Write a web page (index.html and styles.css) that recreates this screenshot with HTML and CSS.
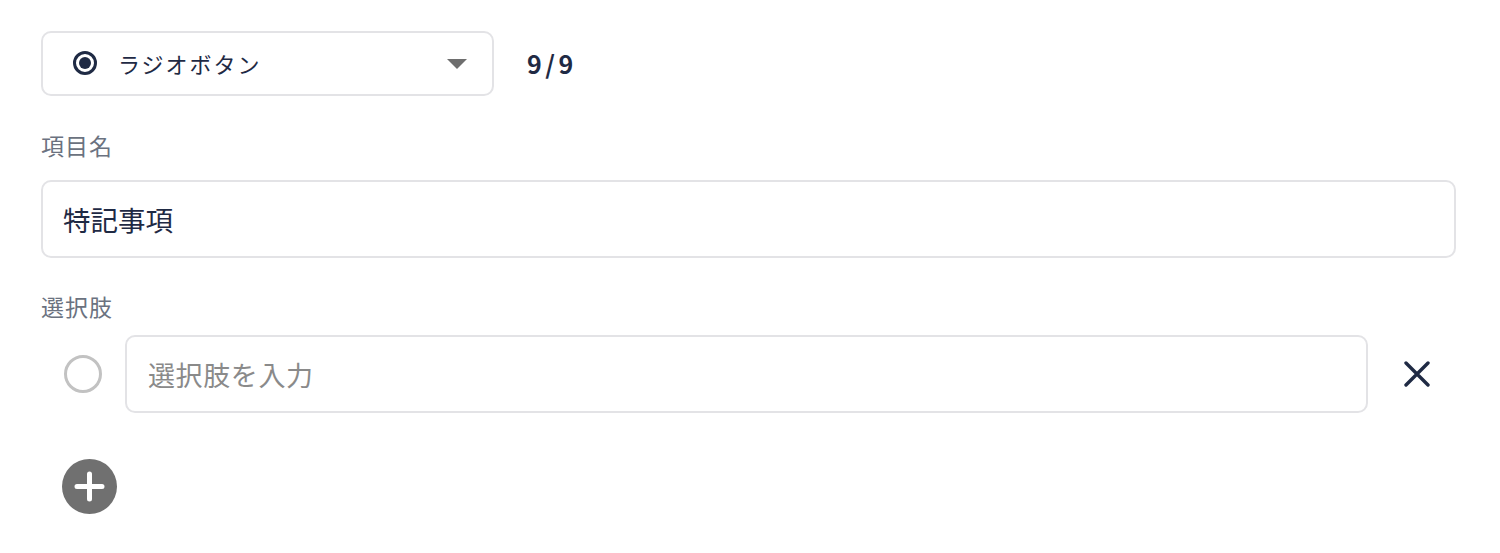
FILE: index.html
```html
<!DOCTYPE html>
<html lang="ja">
<head>
<meta charset="utf-8">
<link rel="stylesheet" href="styles.css">
</head>
<body>
<div class="form">
  <div class="type-row">
    <div class="select">
      <span class="radio-on"><span class="dot"></span></span>
      <span class="select-text">ラジオボタン</span>
      <span class="caret"></span>
    </div>
    <span class="count">9/9</span>
  </div>

  <div class="label label-first">項目名</div>
  <div class="input"><span class="value">特記事項</span></div>

  <div class="label label-second">選択肢</div>
  <div class="option-row">
    <span class="radio-off"></span>
    <div class="input option-input"><span class="placeholder">選択肢を入力</span></div>
    <span class="remove">
      <svg width="26" height="26" viewBox="0 0 26 26"><path d="M2 2 L24 24 M24 2 L2 24" stroke="#1f2a44" stroke-width="3.4" stroke-linecap="round" fill="none"/></svg>
    </span>
  </div>

  <div class="add">
    <svg width="55" height="55" viewBox="0 0 55 55"><circle cx="27.5" cy="27.5" r="27.5" fill="#707070"/><path d="M27.5 15 V40 M15 27.5 H40" stroke="#fff" stroke-width="5" stroke-linecap="round"/></svg>
  </div>
</div>
</body>
</html>
```

FILE: styles.css
```css
html, body {
  margin: 0;
  padding: 0;
  background: #ffffff;
}
body {
  font-family: "Noto Sans CJK JP", "Noto Sans", sans-serif;
  color: #1f2a44;
}
.form {
  padding: 31px 44px 0 41px;
  display: flex;
  flex-direction: column;
  align-items: stretch;
}
.type-row {
  display: flex;
  align-items: center;
  gap: 33px;
}
.select {
  box-sizing: border-box;
  width: 453px;
  height: 65px;
  border: 2px solid #e3e3e6;
  border-radius: 10px;
  display: flex;
  align-items: center;
  padding: 0 25px 2px 30px;
}
.radio-on {
  box-sizing: border-box;
  width: 24px;
  height: 24px;
  border: 3px solid #1f2a44;
  border-radius: 50%;
  display: flex;
  align-items: center;
  justify-content: center;
  flex: none;
}
.dot {
  width: 12px;
  height: 12px;
  border-radius: 50%;
  background: #1f2a44;
}
.select-text {
  margin-left: 21px;
  font-size: 22px;
  letter-spacing: 2px;
  flex: 1;
}
.caret {
  width: 0;
  height: 0;
  border-left: 10px solid transparent;
  border-right: 10px solid transparent;
  border-top: 10px solid #6e6e6e;
  margin-top: 2px;
}
.count {
  font-size: 25px;
  font-weight: 700;
  letter-spacing: 3.5px;
  margin-bottom: 2px;
}
.label {
  font-size: 23px;
  line-height: 32px;
  letter-spacing: 1px;
  color: #6b7280;
}
.label-first {
  margin-top: 33px;
  margin-bottom: 19px;
}
.label-second {
  margin-top: 32px;
  margin-bottom: 13px;
}
.input {
  box-sizing: border-box;
  height: 78px;
  border: 2px solid #e3e3e6;
  border-radius: 10px;
  display: flex;
  align-items: center;
  padding: 0 20px;
}
.value {
  font-size: 27.5px;
}
.option-row {
  display: flex;
  align-items: center;
}
.radio-off {
  box-sizing: border-box;
  width: 38px;
  height: 38px;
  border: 3px solid #c2c2c2;
  border-radius: 50%;
  margin: 0 23px 0 23px;
  flex: none;
}
.option-input {
  flex: 1;
  padding-left: 21px;
}
.placeholder {
  font-size: 27px;
  letter-spacing: 0.6px;
  color: #8a8a8a;
}
.remove {
  width: 88px;
  display: flex;
  justify-content: flex-end;
  padding-right: 26px;
  box-sizing: border-box;
}
.remove svg {
  display: block;
}
.add {
  margin-top: 46px;
  margin-left: 21px;
  width: 55px;
  height: 55px;
}
.add svg {
  display: block;
}
```
